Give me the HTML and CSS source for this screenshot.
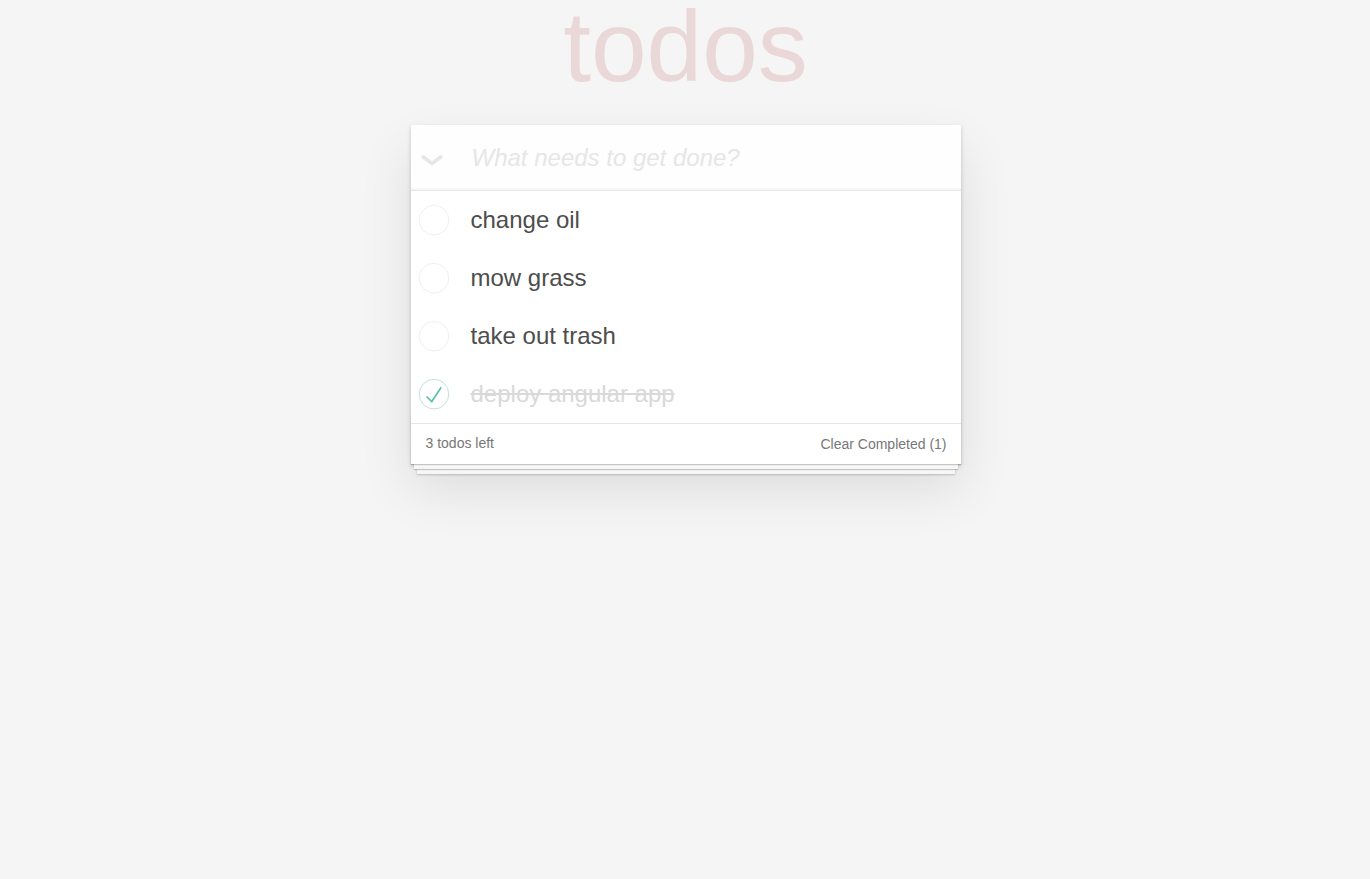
FILE: index.html
```html
<!DOCTYPE html>
<html lang="en">
<head>
<meta charset="utf-8">
<title>todos</title>
<link rel="stylesheet" href="styles.css">
</head>
<body>
<div class="page">
  <h1 class="title">todos</h1>
  <section class="todoapp">
    <header class="header">
      <span class="toggle-all">
        <svg width="24" height="12" viewBox="0 0 24 12"><path d="M2 2 L12 9.5 L22 2" fill="none" stroke="#e6e6e6" stroke-width="3.6" stroke-linecap="butt" stroke-linejoin="miter"/></svg>
      </span>
      <input class="new-todo" placeholder="What needs to get done?">
    </header>
    <section class="main">
      <ul class="todo-list">
        <li class="todo">
          <span class="toggle"><svg width="40" height="40" viewBox="-10 -18 100 135"><circle cx="50" cy="50" r="50" fill="none" stroke="#ededed" stroke-width="3"/></svg></span>
          <label class="todo-label">change oil</label>
        </li>
        <li class="todo">
          <span class="toggle"><svg width="40" height="40" viewBox="-10 -18 100 135"><circle cx="50" cy="50" r="50" fill="none" stroke="#ededed" stroke-width="3"/></svg></span>
          <label class="todo-label">mow grass</label>
        </li>
        <li class="todo">
          <span class="toggle"><svg width="40" height="40" viewBox="-10 -18 100 135"><circle cx="50" cy="50" r="50" fill="none" stroke="#ededed" stroke-width="3"/></svg></span>
          <label class="todo-label">take out trash</label>
        </li>
        <li class="todo completed">
          <span class="toggle"><svg width="40" height="40" viewBox="-10 -18 100 135"><circle cx="50" cy="50" r="50" fill="none" stroke="#bddad5" stroke-width="3"/><path fill="#5dc2af" d="M72 25L42 71 27 56l-4 4 20 20 34-52z"/></svg></span>
          <label class="todo-label">deploy angular app</label>
        </li>
      </ul>
    </section>
    <footer class="footer">
      <span class="todo-count">3 todos left</span>
      <button class="clear-completed">Clear Completed (1)</button>
    </footer>
  </section>
</div>
</body>
</html>
```
FILE: styles.css
```css
html, body {
  margin: 0;
  padding: 0;
}
html {
  background: #f5f5f5;
}
body {
  min-height: 100vh;
  background: #f5f5f5;
  color: #4d4d4d;
  font-family: "Liberation Sans", Arial, sans-serif;
  font-size: 14px;
  line-height: 1.4em;
}
.page {
  width: 550px;
  margin: 0 auto;
  padding: 0 0 80px 1px;
}
.title {
  margin: 0 0 33px 0;
  height: 92px;
  font-size: 100px;
  line-height: 92px;
  font-weight: normal;
  text-align: center;
  color: rgba(175, 47, 47, 0.15);
}
.todoapp {
  position: relative;
  background: #fff;
  box-shadow: 0 2px 4px 0 rgba(0, 0, 0, 0.2), 0 25px 50px 0 rgba(0, 0, 0, 0.1);
}
.header {
  display: flex;
  align-items: center;
  height: 65px;
  background: rgba(0, 0, 0, 0.003);
  box-shadow: inset 0 -2px 1px rgba(0, 0, 0, 0.03);
}
.toggle-all {
  width: 51px;
  padding-left: 9px;
  display: flex;
  align-items: center;
  padding-top: 4px;
}
.toggle-all svg {
  display: block;
}
.new-todo {
  flex: 1;
  min-width: 0;
  margin: 0;
  border: none;
  outline: none;
  background: transparent;
  padding: 16px 16px 16px 1px;
  font-family: inherit;
  font-size: 24px;
  line-height: 1.4em;
  color: inherit;
}
.new-todo::placeholder {
  font-style: italic;
  color: #e6e6e6;
}
.main {
  border-top: 1px solid #e6e6e6;
}
.todo-list {
  margin: 0;
  padding: 0;
  list-style: none;
}
.todo {
  display: flex;
  align-items: center;
  height: 58px;
  font-size: 24px;
}
.toggle {
  width: 40px;
  height: 40px;
  flex: none;
}
.toggle svg {
  display: block;
}
.todo-label {
  display: block;
  margin-left: 5px;
  padding: 15px 60px 15px 15px;
  line-height: 28px;
}
.completed .todo-label {
  color: #d9d9d9;
  text-decoration: line-through;
}
.footer {
  display: flex;
  justify-content: space-between;
  align-items: center;
  height: 20px;
  padding: 10px 14px 10px 15px;
  border-top: 1px solid #e6e6e6;
  color: #777;
  font-size: 14px;
}
.footer::before {
  content: '';
  position: absolute;
  right: 0;
  bottom: 0;
  left: 0;
  height: 50px;
  overflow: hidden;
  box-shadow: 0 1px 1px rgba(0, 0, 0, 0.2),
              0 8px 0 -3px #f6f6f6,
              0 9px 1px -3px rgba(0, 0, 0, 0.2),
              0 16px 0 -6px #f6f6f6,
              0 17px 2px -6px rgba(0, 0, 0, 0.2);
}
.todo-count {
  line-height: 20px;
  position: relative;
  top: -1px;
}
.clear-completed {
  margin: 0;
  padding: 0;
  border: none;
  background: none;
  font-family: inherit;
  font-size: 14px;
  line-height: 20px;
  color: #777;
  cursor: pointer;
}
```
